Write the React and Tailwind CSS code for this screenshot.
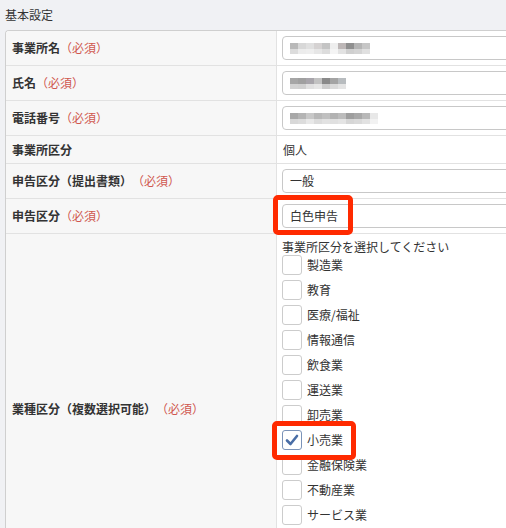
import React from "react";

const font = { fontFamily: '"Noto Sans CJK JP", "Noto Sans", sans-serif' };

function Req() {
  return <span className="font-normal text-[#d0584f]">（必須）</span>;
}

function Blur({ blocks }) {
  return (
    <div className="flex flex-col">
      <div className="flex">
        {blocks.map((c, i) => (
          <div key={i} className="w-[8px] h-[6px]" style={{ backgroundColor: c[0] }} />
        ))}
      </div>
      <div className="flex">
        {blocks.map((c, i) => (
          <div key={i} className="w-[8px] h-[5px]" style={{ backgroundColor: c[1] }} />
        ))}
      </div>
    </div>
  );
}

function Input({ children }) {
  return (
    <div className="h-[24px] w-[300px] border border-[#c8c8c8] rounded-[4px] bg-white flex items-center pl-[7px] text-[12px] text-[#333]">
      {children}
    </div>
  );
}

function Row({ label, children, h = "h-[35px]" }) {
  return (
    <div className={`grid grid-cols-[271px_1fr] border-b border-[#e2e2e2] ${h}`}>
      <div className="bg-[#f7f7f7] border-r border-[#e2e2e2] flex items-center pl-[6px] text-[12px] font-bold text-[#333]">
        {label}
      </div>
      <div className="flex items-center pl-[5px]">{children}</div>
    </div>
  );
}

const industries = [
  "製造業",
  "教育",
  "医療/福祉",
  "情報通信",
  "飲食業",
  "運送業",
  "卸売業",
  "小売業",
  "金融保険業",
  "不動産業",
  "サービス業",
  "建設業",
  "その他",
];

function Check({ checked }) {
  return (
    <div
      className={`w-[20px] h-[20px] rounded-[3px] border bg-white flex items-center justify-center ${
        checked ? "border-[#7b93b8]" : "border-[#cccccc]"
      }`}
    >
      {checked && (
        <svg width="14" height="14" viewBox="0 0 14 14">
          <path d="M2 7.5 L5.5 11 L12 3" fill="none" stroke="#4a6ea6" strokeWidth="2.6" strokeLinecap="round" strokeLinejoin="round" />
        </svg>
      )}
    </div>
  );
}

export default function App() {
  return (
    <div className="w-[506px] h-[528px] overflow-hidden bg-[#f0f1f4] relative" style={font}>
      <div className="h-[30px] pl-[5px] pt-[6px] text-[12px] text-[#333]">基本設定</div>
      <div className="ml-[5px] w-[560px] border-l border-t border-[#cfcfcf] rounded-tl-[4px] bg-white overflow-hidden">
        <Row label={<>事業所名<Req /></>}>
          <Input>
            <Blur blocks={[["#b9b9b9", "#dcdcdc"], ["#d8d8d8", "#ececec"], ["#e0e0e0", "#eeeeee"], ["#d5d2d2", "#e6e6e6"], ["#c4c4c4", "#dcdcdc"], ["#eeeeee", "#f4f4f4"], ["#bdb7b7", "#e2e2e2"], ["#8f8f8f", "#cfcfcf"], ["#b4b4b4", "#d4d4d4"], ["#c6c6c6", "#e0e0e0"]]} />
          </Input>
        </Row>
        <Row label={<>氏名<Req /></>}>
          <Input>
            <Blur blocks={[["#a6a6a6", "#d2d2d2"], ["#a0a0a0", "#d0d0d0"], ["#a8a5ab", "#e0e0e0"], ["#c2c2c2", "#e6e6e6"], ["#8a8a8a", "#cdcdcd"], ["#a4a4a4", "#dadada"], ["#b8bcbf", "#e4e4e4"]]} />
          </Input>
        </Row>
        <Row label={<>電話番号<Req /></>}>
          <Input>
            <Blur blocks={[["#a8a8a8", "#d8d8d8"], ["#b4b4b4", "#dcdcdc"], ["#c8c8c8", "#e8e8e8"], ["#b8b8b8", "#dcdcdc"], ["#c0c0c0", "#e2e2e2"], ["#b2b2b2", "#e0e0e0"], ["#bcbcbc", "#e4e4e4"], ["#9e9e9e", "#d6d6d6"], ["#a8a8a8", "#dadada"], ["#b8b8b8", "#e2e2e2"], ["#e8e8e8", "#f2f2f2"]]} />
          </Input>
        </Row>
        <Row label="事業所区分" h="h-[28px]">
          <span className="text-[12px] text-[#333] pl-[1px]">個人</span>
        </Row>
        <Row label={<>申告区分（提出書類） <Req /></>}>
          <Input>一般</Input>
        </Row>
        <Row label={<>申告区分<Req /></>}>
          <Input>白色申告</Input>
        </Row>
        <div className="grid grid-cols-[271px_1fr] border-b border-[#e2e2e2]">
          <div className="bg-[#f7f7f7] border-r border-[#e2e2e2] flex items-center pl-[6px] text-[12px] font-bold text-[#333]">
            業種区分（複数選択可能） <Req />
          </div>
          <div className="pl-[5px] pt-[5px] pb-[8px] flex flex-col">
            <div className="text-[12px] text-[#333] leading-[16px]">事業所区分を選択してください</div>
            <div className="flex flex-col gap-[5px]">
              {industries.map((name) => (
                <div key={name} className="flex items-center gap-[5px] h-[20px]">
                  <Check checked={name === "小売業"} />
                  <span className="text-[12px] text-[#333]">{name}</span>
                </div>
              ))}
            </div>
          </div>
        </div>
      </div>
      <div className="absolute left-[273px] top-[195px] w-[80px] h-[40px] border-[5px] border-[#ff2a00] rounded-[5px]" />
      <div className="absolute left-[272px] top-[421px] w-[84px] h-[39px] border-[5px] border-[#ff2a00] rounded-[5px]" />
    </div>
  );
}
